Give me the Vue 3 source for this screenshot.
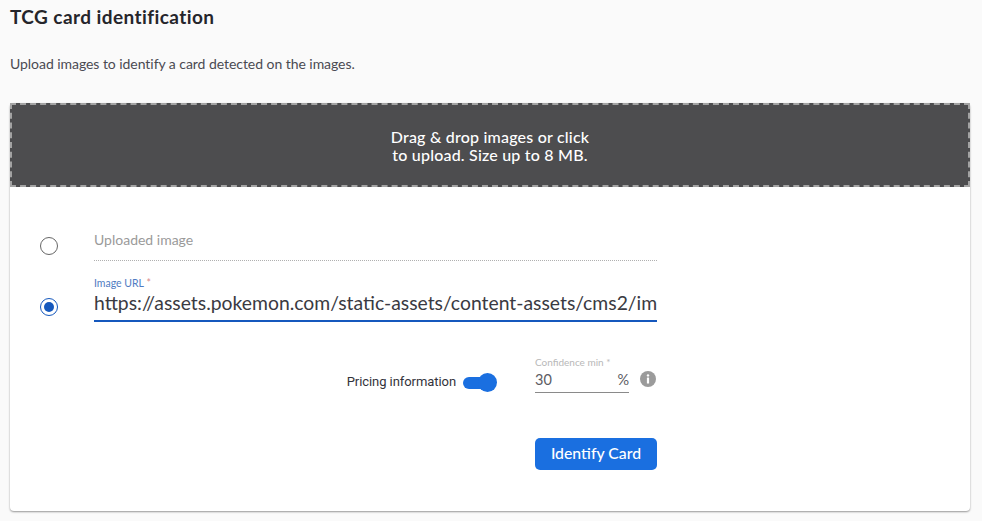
<script setup>
const url = 'https://assets.pokemon.com/static-assets/content-assets/cms2/im'
</script>

<template>
  <main class="page">
    <h1 class="title">TCG card identification</h1>
    <p class="desc">Upload images to identify a card detected on the images.</p>
    <section class="card">
      <div class="drop">Drag &amp; drop images or click<br />to upload. Size up to 8 MB.</div>
      <div class="body">
        <div class="row first">
          <span class="radio"></span>
          <div class="field disabled">Uploaded image</div>
        </div>
        <div class="row second">
          <span class="radio on"><i></i></span>
          <div class="field url">
            <label>Image URL <b>*</b></label>
            <div class="value">{{ url }}</div>
          </div>
        </div>
        <div class="options">
          <span class="pricing">Pricing information</span>
          <span class="toggle"><i></i></span>
          <div class="conf">
            <label>Confidence min *</label>
            <div class="num"><span>30</span><span>%</span></div>
          </div>
          <svg class="info" viewBox="0 0 16 16" width="16" height="16">
            <circle cx="8" cy="8" r="8" fill="#9b9b9b" />
            <circle cx="8" cy="4.4" r="1.2" fill="#fff" />
            <rect x="6.9" y="6.6" width="2.2" height="6" rx=".4" fill="#fff" />
          </svg>
        </div>
        <div class="actions"><button class="btn">Identify Card</button></div>
      </div>
    </section>
  </main>
</template>

<style>
html, body { background: #fafafa; }
</style>

<style scoped>
.page {
  width: 982px;
  height: 521px;
  box-sizing: border-box;
  padding: 0 12px 0 10px;
  overflow: hidden;
  background: #fafafa;
  font-family: Lato, "Open Sans", sans-serif;
  color: #2b2b33;
}
.title {
  margin: 0;
  padding-top: 5px;
  padding-bottom: 1px;
  font-size: 19px;
  line-height: 23px;
  font-weight: 700;
  letter-spacing: .42px;
  color: #25252b;
}
.desc {
  margin: 24px 0 0;
  font-size: 14px;
  line-height: 22px;
  letter-spacing: -.05px;
  color: #4a4a52;
}
.card {
  margin-top: 28px;
  background: #fff;
  border-radius: 4px;
  box-shadow: 0 1px 2px rgba(0, 0, 0, .4);
}
.drop {
  box-sizing: border-box;
  height: 84px;
  border: 2px dashed #a3a3a3;
  background: #4d4d4f;
  color: #fff;
  font-size: 16px;
  line-height: 18px;
  font-weight: 500;
  letter-spacing: .2px;
  text-align: center;
  padding-top: 23px;
}
.body {
  height: 324px;
  box-sizing: border-box;
  padding: 0 0 0 30px;
}
.row {
  display: flex;
  width: 617px;
  gap: 36px;
}
.first { padding-top: 42px; height: 74px; box-sizing: border-box; }
.radio {
  flex: none;
  box-sizing: border-box;
  width: 18px;
  height: 18px;
  margin-top: 8px;
  border: 1px solid #666;
  border-radius: 50%;
  display: flex;
  align-items: center;
  justify-content: center;
}
.radio.on { margin-top: 37px; border: 1.5px solid #1558bd; }
.radio i { width: 10px; height: 10px; border-radius: 50%; background: #1558bd; }
.field { flex: 1; min-width: 0; }
.disabled {
  height: 32px;
  box-sizing: border-box;
  border-bottom: 1px dotted #b0b0b0;
  color: #9a9a9a;
  font-size: 14px;
  line-height: 16px;
  padding-top: 3px;
}
.url { padding-top: 17px; }
.url label {
  display: block;
  font-size: 10.5px;
  line-height: 11px;
  color: #4f7cc2;
}
.url label b { color: #d98a8a; font-weight: 400; }
.value {
  box-sizing: border-box;
  height: 31px;
  margin-top: 2px;
  white-space: nowrap;
  font-size: 19.35px;
  line-height: 24px;
  color: #3a3a42;
  border-bottom: 2px solid #1558bd;
}
.options {
  width: 563px;
  margin-left: 54px;
  margin-top: 35px;
  height: 40px;
  display: flex;
  justify-content: flex-end;
  align-items: flex-start;
}
.pricing {
  font-family: Roboto, sans-serif;
  font-size: 13px;
  line-height: 16px;
  letter-spacing: -.07px;
  margin-top: 17px;
  color: #33333b;
}
.toggle {
  position: relative;
  width: 28px;
  height: 12px;
  margin: 20px 0 0 7px;
  border-radius: 6px;
  background: #1a6fe0;
}
.toggle i {
  position: absolute;
  right: -6px;
  top: -4px;
  width: 19px;
  height: 19px;
  border-radius: 50%;
  background: #1a6fe0;
}
.conf { width: 94px; margin-left: 44px; }
.conf label {
  display: block;
  font-size: 10px;
  line-height: 11px;
  color: #b8b8b8;
}
.num {
  display: flex;
  justify-content: space-between;
  height: 25px;
  box-sizing: border-box;
  font-size: 14.5px;
  line-height: 24px;
  color: #5c5c63;
  border-bottom: 1px solid #8a8a8a;
}
.info { margin: 14px 1px 0 11px; }
.actions {
  width: 563px;
  margin-left: 54px;
  margin-top: 41px;
  display: flex;
  justify-content: flex-end;
}
.btn {
  width: 122px;
  height: 32px;
  border: 0;
  border-radius: 5px;
  background: #1a6fe0;
  color: #fff;
  font-family: inherit;
  font-size: 15.8px;
  font-weight: 500;
  padding: 0 0 4px;
}
</style>
